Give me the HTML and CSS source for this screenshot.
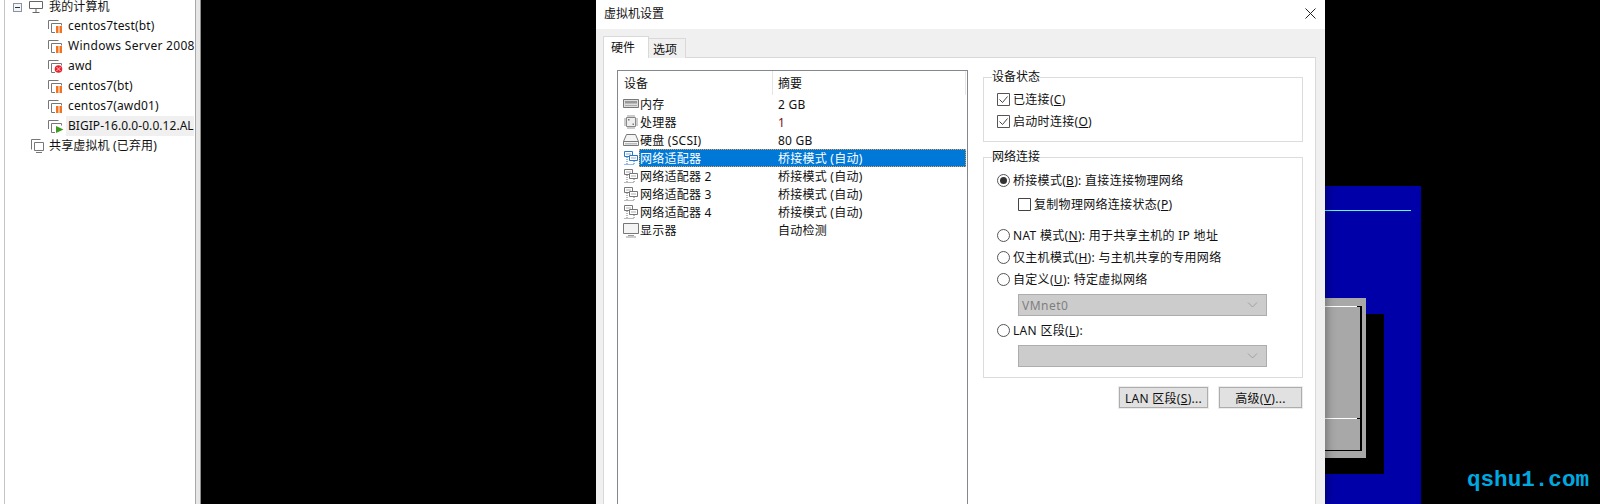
FILE: index.html
```html
<!DOCTYPE html>
<html lang="zh">
<head>
<meta charset="utf-8">
<title>虚拟机设置</title>
<link rel="stylesheet" href="styles.css">
</head>
<body>
<svg class="defs" width="0" height="0" aria-hidden="true">
  <defs>
    <path id="vm-base" d="M.5 11V2.500H10.500M3.500 14.500V5.500H13.500V7.500M3.500 14.500H7" fill="none" stroke="#777"/>
    <path id="vm-bars" d="M8 8h2.500v7H8zM11.500 8H14v7h-2.500z" fill="#f4721e"/>
    <g id="net" stroke="currentColor" stroke-width="1">
      <path d="M1.500 1.500h8v5h-8z" fill="none"/>
      <path d="M3 3h5v2H3z" fill="currentColor" stroke="none" opacity=".3"/>
      <path d="M6.500 5.500h8v5h-8z" fill="#fff"/>
      <path d="M8 7h5v2H8z" fill="currentColor" stroke="none" opacity=".3"/>
      <path d="M4 7v7M1.500 14.500h10M11 11v3" fill="none" stroke-dasharray="1 1"/>
    </g>
    <g id="tick">
      <path d="M.5 .5h12v12H.5z" fill="#fff" stroke="#555"/>
      <path d="M2.500 6.500l3 3 5-6" fill="none" stroke="#444"/>
    </g>
  </defs>
</svg>
<div class="desktop">
  <nav class="sidebar">
    <div class="tree">
      <div class="tree-row tree-root">
        <svg class="expander" width="9" height="9" viewBox="0 0 9 9"><rect x=".5" y=".5" width="8" height="8" fill="#f3f5f8" stroke="#8a93a3"/><path d="M2 4.500h5" stroke="#333"/></svg>
        <svg class="ico" width="16" height="14" viewBox="0 0 16 14"><path d="M.5 1.500h13v7H.5zM7 9v3M3.500 12.500h7" fill="none" stroke="#666"/></svg>
        <span>我的计算机</span>
      </div>
      <div class="tree-row tree-vm">
        <svg class="ico" width="16" height="16" viewBox="0 0 16 16"><use href="#vm-base"/><use href="#vm-bars"/></svg>
        <span>centos7test(bt)</span>
      </div>
      <div class="tree-row tree-vm">
        <svg class="ico" width="16" height="16" viewBox="0 0 16 16"><use href="#vm-base"/><use href="#vm-bars"/></svg>
        <span class="wide">Windows Server 2008</span>
      </div>
      <div class="tree-row tree-vm">
        <svg class="ico" width="16" height="16" viewBox="0 0 16 16"><use href="#vm-base"/><circle cx="10.500" cy="11" r="3.800" fill="#e4262c"/><path d="M8.500 9l4 4M12.500 9l-4 4" stroke="#fbc" fill="none"/></svg>
        <span>awd</span>
      </div>
      <div class="tree-row tree-vm">
        <svg class="ico" width="16" height="16" viewBox="0 0 16 16"><use href="#vm-base"/><use href="#vm-bars"/></svg>
        <span>centos7(bt)</span>
      </div>
      <div class="tree-row tree-vm">
        <svg class="ico" width="16" height="16" viewBox="0 0 16 16"><use href="#vm-base"/><use href="#vm-bars"/></svg>
        <span>centos7(awd01)</span>
      </div>
      <div class="tree-row tree-vm">
        <svg class="ico" width="16" height="16" viewBox="0 0 16 16"><use href="#vm-base"/><path d="M8 8l7.500 3.500L8 15z" fill="#3c9a1e"/></svg>
        <span class="current">BIGIP-16.0.0-0.0.12.AL</span>
      </div>
      <div class="tree-row tree-shared">
        <svg class="ico" width="16" height="16" viewBox="0 0 16 16"><path d="M.5 11.500V1.500H9.500M3.500 4.500h9v8h-9zM5 14.500h6" fill="none" stroke="#777"/></svg>
        <span>共享虚拟机 (已弃用)</span>
      </div>
    </div>
  </nav>

  <div class="guest">
    <div class="guest-screen">
      <div class="cyan-line"></div>
      <div class="guest-shadow"></div>
      <div class="guest-box"><div class="guest-inner"></div></div>
    </div>
    <div class="watermark">qshu1.com</div>
  </div>

  <section class="dialog">
    <header class="titlebar">
      <span>虚拟机设置</span>
      <svg class="close" width="11" height="11" viewBox="0 0 11 11"><path d="M.5 .5l10 10M10.500 .5l-10 10" stroke="#222" fill="none"/></svg>
    </header>
    <div class="dialog-body">
      <div class="tabs">
        <div class="tab tab-on">硬件</div>
        <div class="tab">选项</div>
      </div>
      <div class="panel">
        <div class="devices">
          <div class="dev-head"><span class="c1">设备</span><span class="c2">摘要</span></div>
          <div class="dev-row">
            <svg class="dev-ico" width="16" height="16" viewBox="0 0 16 16"><path d="M.5 3.500h15v8H.5z" fill="#ddd" stroke="#777"/><path d="M2 5h12v2.500H2z" fill="#999"/><path d="M2 9.500h12" stroke="#aaa"/></svg>
            <span class="dev-name">内存</span><span class="dev-val">2 GB</span>
          </div>
          <div class="dev-row">
            <svg class="dev-ico" width="16" height="16" viewBox="0 0 16 16"><path d="M3.500 3.500h9v9h-9z" fill="#eee" stroke="#888"/><path d="M5 1v2M7 1v2M9 1v2M11 1v2M5 13v2M7 13v2M9 13v2M11 13v2M1 5h2M1 7h2M1 9h2M1 11h2M13 5h2M13 7h2M13 9h2M13 11h2" stroke="#999"/><path d="M5 5h1.500v1.500H5zM9.500 9.500H11V11H9.500z" fill="#777"/></svg>
            <span class="dev-name">处理器</span><span class="dev-val dev-red">1</span>
          </div>
          <div class="dev-row">
            <svg class="dev-ico" width="16" height="16" viewBox="0 0 16 16"><path d="M3.500 2.500h9l3 7v4H.5v-4z" fill="#f4f4f4" stroke="#777"/><path d="M.5 9.500h15" stroke="#777"/><path d="M2 11h12v1.500H2z" fill="#bbb"/></svg>
            <span class="dev-name">硬盘 (SCSI)</span><span class="dev-val">80 GB</span>
          </div>
          <div class="dev-row dev-selected">
            <svg class="dev-ico net-blue" width="16" height="16" viewBox="0 0 16 16"><use href="#net"/></svg>
            <span class="dev-name">网络适配器</span><span class="dev-val">桥接模式 (自动)</span>
          </div>
          <div class="dev-row">
            <svg class="dev-ico net-gray" width="16" height="16" viewBox="0 0 16 16"><use href="#net"/></svg>
            <span class="dev-name">网络适配器 2</span><span class="dev-val">桥接模式 (自动)</span>
          </div>
          <div class="dev-row">
            <svg class="dev-ico net-gray" width="16" height="16" viewBox="0 0 16 16"><use href="#net"/></svg>
            <span class="dev-name">网络适配器 3</span><span class="dev-val">桥接模式 (自动)</span>
          </div>
          <div class="dev-row">
            <svg class="dev-ico net-gray" width="16" height="16" viewBox="0 0 16 16"><use href="#net"/></svg>
            <span class="dev-name">网络适配器 4</span><span class="dev-val">桥接模式 (自动)</span>
          </div>
          <div class="dev-row">
            <svg class="dev-ico" width="16" height="16" viewBox="0 0 16 16"><path d="M.5 1.500h15v10H.5z" fill="#f4f4f4" stroke="#777"/><path d="M5 13.500h6M3 15h10" stroke="#999"/></svg>
            <span class="dev-name">显示器</span><span class="dev-val">自动检测</span>
          </div>
        </div>

        <div class="side">
          <fieldset class="group group-state">
            <legend>设备状态</legend>
            <div class="opt"><svg class="box" width="13" height="13" viewBox="0 0 13 13"><use href="#tick"/></svg><span>已连接(<u>C</u>)</span></div>
            <div class="opt"><svg class="box" width="13" height="13" viewBox="0 0 13 13"><use href="#tick"/></svg><span>启动时连接(<u>O</u>)</span></div>
          </fieldset>
          <fieldset class="group group-net">
            <legend>网络连接</legend>
            <div class="opt"><span class="radio radio-on"></span><span>桥接模式(<u>B</u>): 直接连接物理网络</span></div>
            <div class="opt opt-sub"><svg class="box" width="13" height="13" viewBox="0 0 13 13"><path d="M.5 .5h12v12H.5z" fill="#fff" stroke="#444"/></svg><span>复制物理网络连接状态(<u>P</u>)</span></div>
            <div class="opt opt-gap"><span class="radio"></span><span>NAT 模式(<u>N</u>): 用于共享主机的 IP 地址</span></div>
            <div class="opt"><span class="radio"></span><span>仅主机模式(<u>H</u>): 与主机共享的专用网络</span></div>
            <div class="opt"><span class="radio"></span><span>自定义(<u>U</u>): 特定虚拟网络</span></div>
            <div class="select"><span>VMnet0</span><svg width="11" height="6" viewBox="0 0 11 6"><path d="M1 .5l4.500 4.500L10 .5" fill="none" stroke="#a0a0a0"/></svg></div>
            <div class="opt opt-lan"><span class="radio"></span><span>LAN 区段(<u>L</u>):</span></div>
            <div class="select"><span></span><svg width="11" height="6" viewBox="0 0 11 6"><path d="M1 .5l4.500 4.500L10 .5" fill="none" stroke="#a0a0a0"/></svg></div>
          </fieldset>
          <div class="buttons">
            <button class="btn btn-lan" type="button">LAN 区段(<u>S</u>)...</button>
            <button class="btn btn-adv" type="button">高级(<u>V</u>)...</button>
          </div>
        </div>
      </div>
    </div>
  </section>
</div>
</body>
</html>
```
FILE: styles.css
```css
* { box-sizing: border-box; }
html, body { margin: 0; height: 100%; overflow: hidden; background: #000; }
body {
  font-family: "Noto Sans", "Noto Sans CJK SC", sans-serif;
  font-size: 12px;
  color: #111;
}
.defs { position: absolute; }
.desktop { position: relative; width: 1600px; height: 504px; display: flex; background: #000; }

/* tree */
.sidebar {
  width: 201px; height: 504px; flex: none;
  border-left: 4px solid #fff;
  border-right: 1px solid #8c8c8c;
  background: #e6e6e6;
  padding-right: 4px;
}
.tree {
  height: 100%;
  background: #fff;
  border-left: 1px solid #c4c4c4;
  border-right: 1px solid #a8a8a8;
}
.tree-row { height: 20px; display: flex; align-items: center; white-space: nowrap; letter-spacing: .15px; }
.tree-row span { line-height: 20px; }
.tree-root { height: 16px; padding-left: 8px; align-items: flex-start; }
.tree-root span { line-height: 14px; }
.expander { flex: none; margin-top: 3px; }
.tree-root .ico { margin-left: 7px; margin-right: 4px; }
.tree-vm { padding-left: 43px; }
.tree-vm .ico { margin-right: 2px; flex: none; }
.tree-vm span { padding-left: 2px; }
.wide { letter-spacing: .3px; }
.tree-shared { padding-left: 26px; }
.tree-shared .ico { margin-right: 2px; }
.tree-vm .current { background: #f0f0f0; height: 20px; width: 128px; letter-spacing: .05px; }

/* guest console */
.guest { flex: 1; position: relative; }
.guest-screen {
  position: absolute; left: 1124px; top: 186px; width: 96px; height: 318px;
  background: #0000a8;
}
.cyan-line { position: absolute; left: 0; top: 24px; width: 86px; height: 1px; background: #54fcfc; }
.guest-shadow { position: absolute; left: 0; top: 128px; width: 59px; height: 160px; background: #000; }
.guest-box { position: absolute; left: 0; top: 112px; width: 41px; height: 160px; background: #a8a8a8; }
.guest-inner {
  position: absolute; left: 0; top: 8px; width: 37px; height: 145px;
  border-right: 2px solid #000; border-bottom: 1px solid #000;
  background:
    linear-gradient(#fff, #fff) 0 0 / 32px 1px no-repeat,
    linear-gradient(#fff, #fff) 0 112px / 32px 1px no-repeat,
    linear-gradient(#000, #000) 0 0 / 100% 1px no-repeat,
    linear-gradient(#000, #000) 0 112px / 100% 1px no-repeat;
}
.watermark {
  position: absolute; left: 1266px; top: 464px;
  font-family: "Liberation Mono", monospace; font-weight: 700; font-size: 22.600px; line-height: 32px;
  color: #00a8e0;
}

/* dialog */
.dialog {
  position: absolute; left: 596px; top: 0; width: 729px; height: 504px;
  background: #f0f0f0;
  box-shadow: 0 0 10px rgba(0,0,0,.45);
  display: flex; flex-direction: column;
}
.titlebar {
  height: 29px; flex: none; background: #fff;
  display: flex; align-items: center; justify-content: space-between;
  padding: 0 9px 3px 8px;
}
.dialog-body { flex: 1; padding: 7px 9px 0 7px; display: flex; flex-direction: column; min-height: 0; }
.tabs { display: flex; height: 22px; flex: none; align-items: flex-end; position: relative; z-index: 1; margin-bottom: -1px; }
.tab {
  width: 37px; height: 20px; background: #f0f0f0;
  border: 1px solid #d9d9d9; border-bottom: 0; border-left: 0;
  display: flex; align-items: center; padding: 0 0 0 4px;
}
.tab-on { width: 46px; height: 22px; background: #fff; border-left: 1px solid #d9d9d9; padding: 0 0 1px 7px; }
.panel {
  flex: 1; background: #fff; border: 1px solid #d9d9d9; border-bottom: 0;
  padding: 12px 12px 0 13px;
  display: flex; gap: 15px; min-height: 0; overflow: hidden;
}

/* devices */
.devices {
  width: 351px; flex: none; height: 500px;
  border: 1px solid #828790;
  padding: 0 1px;
}
.dev-head { height: 24px; display: flex; }
.dev-head span { height: 24px; line-height: 26px; }
.c1 { width: 154px; padding-left: 5px; border-right: 1px solid #e5e5e5; }
.c2 { width: 193px; padding-left: 5px; border-right: 1px solid #e5e5e5; }
.dev-row { height: 18px; padding-top: 2px; line-height: 16px; display: flex; position: relative; white-space: nowrap; letter-spacing: .25px; }
.dev-ico { position: absolute; left: 4px; top: 1px; }
.dev-name { width: 154px; padding-left: 21px; flex: none; }
.dev-val { flex: 1; padding-left: 5px; }
.dev-red { color: #7a1020; }
.dev-selected { color: #fff; }
.dev-selected::before {
  content: ""; position: absolute; left: 20px; right: 0; top: 0; bottom: 0;
  background: #0078d7; outline: 1px dotted #e8a040; outline-offset: -1px;
}
.dev-selected span { position: relative; }
.net-blue { color: #2a78c8; }
.net-gray { color: #777; }

/* right column */
.side { width: 320px; flex: none; display: flex; flex-direction: column; }
.group { margin: 0; border: 1px solid #dcdcdc; padding: 0 0 0 13px; min-width: 0; }
.group legend { margin-left: -5px; padding: 0; height: 14px; line-height: 14px; }
.group-state { height: 72px; padding-top: 4px; }
.group-net { height: 228px; margin-top: 8px; padding-top: 5px; }
.opt { height: 22px; display: flex; align-items: center; gap: 3px; white-space: nowrap; letter-spacing: .3px; }
.box { flex: none; }
.radio { width: 13px; height: 13px; border: 1px solid #555; border-radius: 50%; flex: none; background: #fff; position: relative; }
.radio-on::after { content: ""; position: absolute; left: 2px; top: 2px; width: 7px; height: 7px; border-radius: 50%; background: #333; }
.opt-sub { padding-left: 21px; height: 26px; }
.opt-gap { margin-top: 7px; }
.select {
  margin: 4px 0 0 21px; width: 249px; height: 22px;
  background: #ccc; border: 1px solid #adadad;
  display: flex; align-items: center; justify-content: space-between;
  padding: 0 8px 0 3px; color: #7f7f7f; letter-spacing: .5px;
}
.opt-lan { margin-top: 3px; }
.buttons { display: flex; justify-content: flex-end; gap: 11px; margin-top: 9px; padding-right: 1px; }
.btn {
  font: inherit; color: #111; height: 21px; padding: 0; margin: 0;
  background: #e1e1e1; border: 1px solid #adadad; letter-spacing: .3px;
  outline: 1px solid #ececec;
}
.btn-lan { width: 89px; }
.btn-adv { width: 83px; }
u { text-decoration-thickness: 1px; }
```
